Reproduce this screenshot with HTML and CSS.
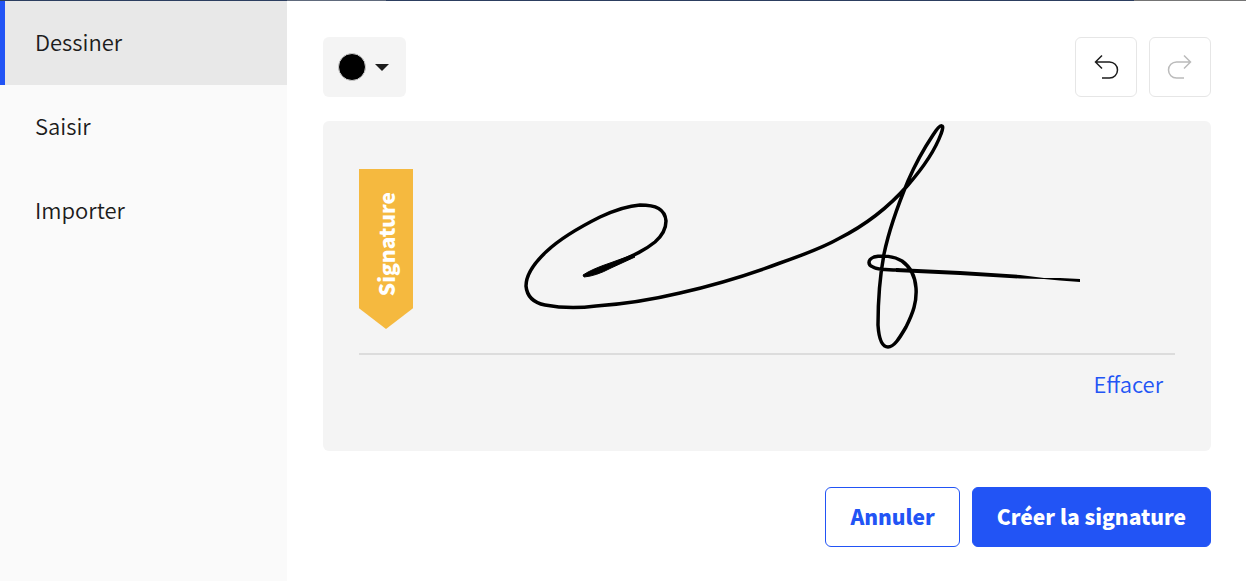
FILE: index.html
```html
<!DOCTYPE html>
<html lang="fr">
<head>
<meta charset="utf-8">
<title>Signature</title>
<link rel="stylesheet" href="styles.css">
</head>
<body>
<div class="page-edge"></div>
<div class="dialog">
  <nav class="tabs">
    <button type="button" class="tab tab-active">Dessiner</button>
    <button type="button" class="tab">Saisir</button>
    <button type="button" class="tab">Importer</button>
  </nav>
  <main class="content">
    <div class="toolbar">
      <button type="button" class="color-picker" aria-label="Couleur">
        <span class="swatch"></span>
        <svg class="caret" width="16" height="7" viewBox="0 0 16 7"><path d="M1 0h14L8 7z"/></svg>
      </button>
      <div class="history">
        <button type="button" class="icon-button" aria-label="Annuler le trait">
          <svg width="26" height="26" viewBox="0 0 26 26"><path d="M9 1.500L2.500 8l6.500 6.500M2.500 8H16.500a8 8 0 0 1 0 16H9"/></svg>
        </button>
        <button type="button" class="icon-button" aria-label="Rétablir le trait" disabled>
          <svg width="26" height="26" viewBox="0 0 26 26"><path d="M17 1.500L23.500 8 17 14.500M23.500 8H9.500a8 8 0 0 0 0 16H17"/></svg>
        </button>
      </div>
    </div>
    <section class="pad">
      <div class="pad-area">
        <span class="ribbon"><span class="ribbon-text">Signature</span></span>
      </div>
      <button type="button" class="clear">Effacer</button>
      <svg class="ink" viewBox="323 121 888 330" role="img" aria-label="Signature dessinée">
        <path class="stroke" d="M612 265C632 256 644 251 655 242C663 235 666 229 666 221C665 209 656 205 640 205C625 206 613 211 600 217C580 227 562 237 547 251C533 264 526 275 526 286C527 297 535 303 545 305C561 308 581 308 596 306C625 304 655 299 680 293C715 285 748 275 780 263C800 256 822 248 838 239C862 227 888 208 908 185C922 169 934 153 941 134C943 129 943 126 942 126C940 125 937 129 933 135C923 150 914 167 908 181C898 205 889 230 884 254C879 281 878 302 878 325C879 341 883 347 888 347C894 347 899 339 906 327C913 313 917 302 916 288C915 274 909 266 902 261C894 256 882 255 874 257C867 260 868 265 873 267C878 270 888 270 898 270"/>
        <path class="blot" d="M583 275Q592 269 610 263L632 255 635 257 611 268Q596 276 584 277z"/>
        <path class="trail" d="M896 268L960 271 1020 275 1044 278 1060 278 1080 279V282L1060 280.500 1044 279 1020 278.500 960 275 896 272z"/>
      </svg>
    </section>
    <div class="actions">
      <button type="button" class="button button-outline">Annuler</button>
      <button type="button" class="button button-primary">Créer la signature</button>
    </div>
  </main>
</div>
</body>
</html>
```
FILE: styles.css
```css
* {
  box-sizing: border-box;
}

body {
  margin: 0;
  min-height: 100vh;
  display: flex;
  flex-direction: column;
  background: #fff;
  color: #1c1c1c;
  font-family: "Noto Sans CJK SC", "Noto Sans", sans-serif;
  font-size: 22px;
  font-weight: 350;
  line-height: 24px;
}

button {
  margin: 0;
  border: 0;
  font: inherit;
  color: inherit;
  background: none;
  cursor: pointer;
}

.page-edge {
  height: 1px;
  background: linear-gradient(90deg, #2c3e60 0 23%, #606a7c 23% 31%, #2c3e60 31% 91%, #747474 91%);
}

.dialog {
  flex: 1;
  display: flex;
}

.tabs {
  flex: 0 0 287px;
  display: flex;
  flex-direction: column;
  background: #fafafa;
}

.tab {
  height: 84px;
  padding: 0 30px 4px;
  border-left: 5px solid transparent;
  text-align: left;
}

.tab-active {
  background: #e8e8e8;
  border-left-color: #2254f5;
}

.content {
  flex: 1;
  padding: 36px 35px 34px 36px;
  display: flex;
  flex-direction: column;
}

.toolbar {
  display: flex;
  justify-content: space-between;
  margin-bottom: 24px;
}

.color-picker {
  height: 60px;
  padding: 0 16px 0 15px;
  display: flex;
  align-items: center;
  gap: 8px;
  border-radius: 6px;
  background: #f4f4f4;
}

.swatch {
  width: 28px;
  height: 28px;
  border: 1px solid #ccc;
  border-radius: 50%;
  background: #000;
}

.caret {
  fill: #1c1c1c;
}

.history {
  display: flex;
  gap: 12px;
}

.icon-button {
  width: 62px;
  height: 60px;
  padding: 0;
  display: grid;
  place-items: center;
  border: 1px solid #e6e6e6;
  border-radius: 6px;
}

.icon-button svg {
  fill: none;
  stroke: #1c1c1c;
  stroke-width: 1.5;
}

.icon-button:disabled svg {
  stroke: #bbb;
}

.pad {
  position: relative;
  padding: 48px 36px 42px;
  display: flex;
  flex-direction: column;
  align-items: flex-end;
  border-radius: 6px;
  background: #f4f4f4;
}

.pad-area {
  align-self: stretch;
  padding-bottom: 24px;
  border-bottom: 2px solid #dcdcdc;
}

.ribbon {
  width: 54px;
  height: 160px;
  padding-bottom: 9px;
  display: flex;
  align-items: center;
  justify-content: center;
  background: #f5b93f;
  clip-path: polygon(0 0, 100% 0, 100% 87%, 50% 100%, 0 87%);
}

.ribbon-text {
  writing-mode: vertical-rl;
  transform: rotate(180deg);
  color: #fff;
  font-size: 21px;
  font-weight: 900;
}

.ink {
  position: absolute;
  inset: 0;
  width: 100%;
  height: 100%;
  pointer-events: none;
}

.stroke {
  fill: none;
  stroke: #000;
  stroke-width: 3.5;
  stroke-linecap: round;
  stroke-linejoin: round;
}

.blot {
  stroke: #000;
  stroke-width: 1;
}

.clear {
  height: 48px;
  margin-top: 6px;
  padding: 0 12px 4px;
  color: #2254f5;
}

.actions {
  display: flex;
  justify-content: flex-end;
  gap: 12px;
  margin-top: 36px;
}

.button {
  height: 60px;
  padding: 0 24px 2px;
  border: 1px solid #2254f5;
  border-radius: 6px;
  font-size: 21px;
  font-weight: 900;
}

.button-outline {
  color: #2254f5;
}

.button-primary {
  background: #2254f5;
  color: #fff;
}
```
